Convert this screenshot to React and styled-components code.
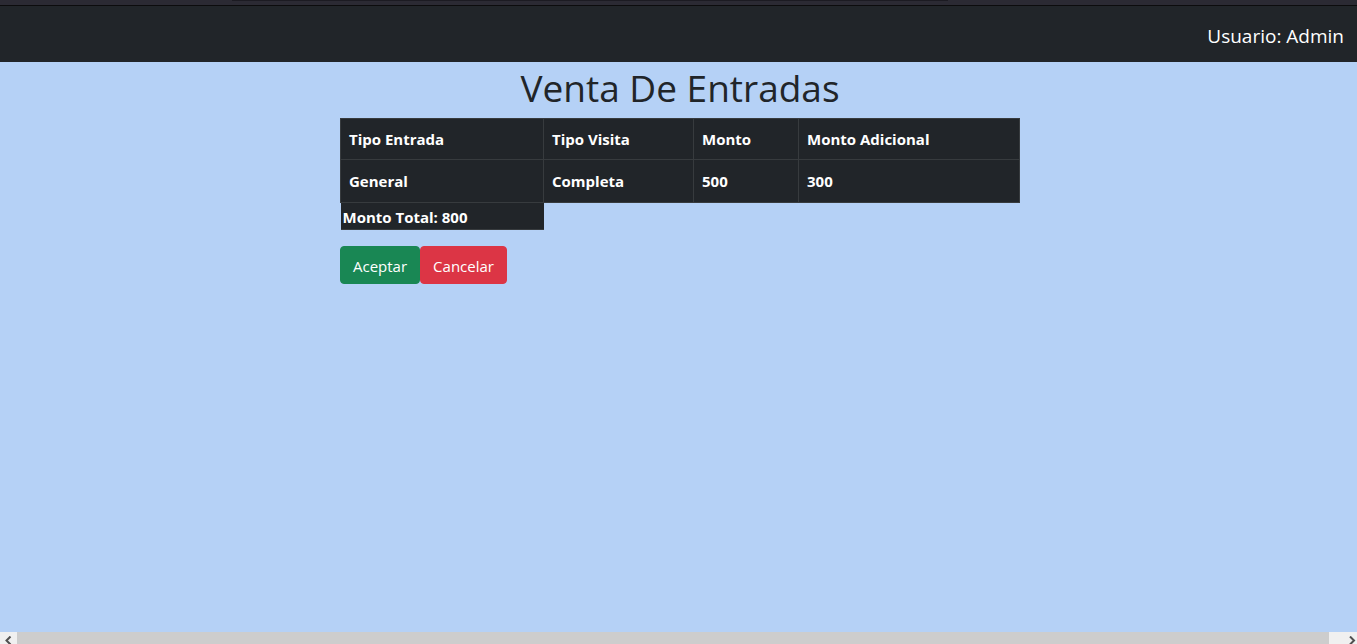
import React from 'react';
import styled, { createGlobalStyle } from 'styled-components';

const GlobalStyle = createGlobalStyle`
  * { box-sizing: border-box; }
  body {
    margin: 0;
    background: #b5d1f6;
    color: #212529;
    font-family: "Segoe UI", "Open Sans", "Noto Sans", sans-serif;
    font-size: 15px;
    line-height: 24px;
  }
`;

const Page = styled.div`
  display: flex;
  flex-direction: column;
  height: 100vh;
`;

const WindowEdge = styled.div`
  display: flex;
  flex: none;
  justify-content: center;
  height: 6px;
  padding-right: 177px;
  background: #2b2a33;
  border-bottom: 1px solid #0c0c0d;
`;

const AddressEdge = styled.div`
  width: 716px;
  height: 1px;
  background: #1c1b22;
`;

const Navbar = styled.header`
  display: flex;
  flex: none;
  align-items: center;
  justify-content: flex-end;
  height: 56px;
  padding: 4px 13px 0;
  background: #212529;
  color: #fff;
  font-size: 19px;
`;

const Main = styled.main`
  flex: 1;
  min-height: 0;
  padding-left: 3px;
`;

const Content = styled.section`
  width: 100%;
  max-width: 680px;
  margin: 0 auto;
`;

const Title = styled.h1`
  margin: 0 0 4px;
  font-size: 37px;
  font-weight: 400;
  line-height: 52px;
  text-align: center;
`;

const Table = styled.table`
  width: 100%;
  margin-bottom: 16px;
  table-layout: fixed;
  border-collapse: collapse;
  text-align: left;
`;

const Column = styled.col`
  width: ${({ $width }) => $width};
`;

const Row = styled.tr`
  height: ${({ $height }) => $height}px;
`;

const Cell = styled.th`
  padding: 0 8px;
  border: 1px solid #373b3e;
  background: #212529;
  color: #fff;
  font-weight: 700;
`;

const TotalCell = styled.td`
  padding: 2px 2px 0;
  border-bottom: 1px solid #373b3e;
  background: #212529;
  color: #fff;
  font-weight: 700;
`;

const Actions = styled.div`
  display: flex;
`;

const Button = styled.button`
  height: 38px;
  padding: 2px 12px 0;
  border: 1px solid ${({ $color }) => $color};
  border-radius: 4px;
  background: ${({ $color }) => $color};
  color: #fff;
  font: inherit;
  cursor: pointer;
`;

const ScrollBar = styled.footer`
  display: flex;
  flex: none;
  height: 12px;
  overflow: hidden;
  background: #f0f0f0;
`;

const ScrollButton = styled.button`
  display: flex;
  flex: none;
  width: 17px;
  height: 17px;
  align-items: center;
  justify-content: ${({ $align }) => $align};
  padding: 0;
  border: 0;
  background: #f0f0f0;
`;

const ScrollThumb = styled.div`
  flex: 1;
  margin-right: 11px;
  background: #cdcdcd;
`;

const Arrow = ({ d }) => (
  <svg width="9" height="9" viewBox="0 0 9 9" fill="none" stroke="#505050" strokeWidth="2" aria-hidden="true">
    <path d={d} />
  </svg>
);

export default function App() {
  return (
    <>
      <GlobalStyle />
      <Page>
        <WindowEdge><AddressEdge /></WindowEdge>
        <Navbar>Usuario: Admin</Navbar>
        <Main>
          <Content>
            <Title>Venta De Entradas</Title>
            <Table>
              <colgroup>
                <Column $width="203px" />
                <Column $width="150px" />
                <Column $width="105px" />
                <Column $width="auto" />
              </colgroup>
              <thead>
                <Row $height={41}>
                  <Cell scope="col">Tipo Entrada</Cell>
                  <Cell scope="col">Tipo Visita</Cell>
                  <Cell scope="col">Monto</Cell>
                  <Cell scope="col">Monto Adicional</Cell>
                </Row>
              </thead>
              <tbody>
                <Row $height={43}>
                  <Cell as="td">General</Cell>
                  <Cell as="td">Completa</Cell>
                  <Cell as="td">500</Cell>
                  <Cell as="td">300</Cell>
                </Row>
                <Row $height={27}>
                  <TotalCell>Monto Total: 800</TotalCell>
                </Row>
              </tbody>
            </Table>
            <Actions>
              <Button type="button" $color="#198754">Aceptar</Button>
              <Button type="button" $color="#dc3545">Cancelar</Button>
            </Actions>
          </Content>
        </Main>
        <ScrollBar>
          <ScrollButton type="button" $align="center" aria-label="Desplazar a la izquierda"><Arrow d="M6.5 0.5 2.5 4.5l4 4" /></ScrollButton>
          <ScrollThumb />
          <ScrollButton type="button" $align="flex-end" aria-label="Desplazar a la derecha"><Arrow d="M2 0.5 6 4.5l-4 4" /></ScrollButton>
        </ScrollBar>
      </Page>
    </>
  );
}
